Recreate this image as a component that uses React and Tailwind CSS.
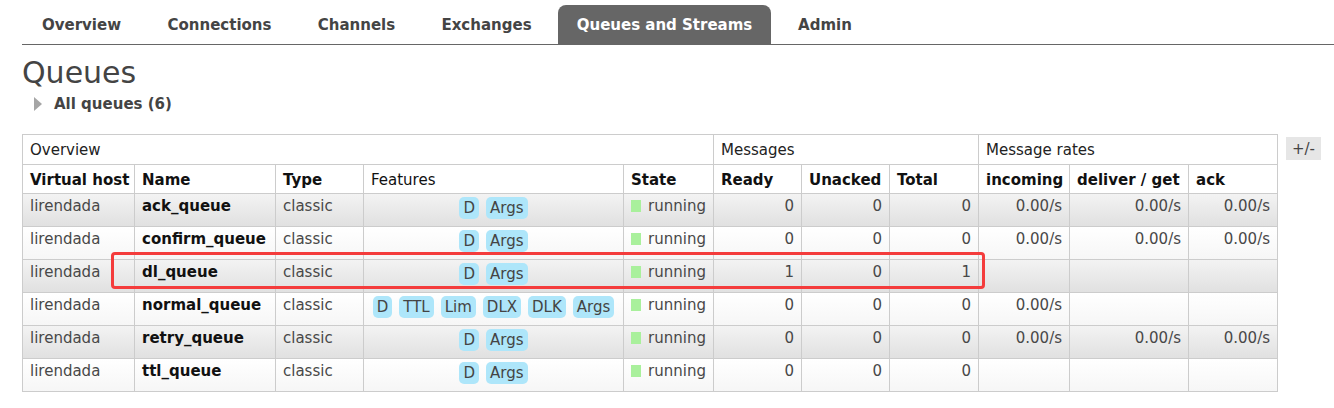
import React from "react";

const tabs = [
  { label: "Overview", w: "w-[119px]" },
  { label: "Connections", w: "w-[143px]" },
  { label: "Channels", w: "w-[117px]" },
  { label: "Exchanges", w: "w-[129px]" },
  { label: "Queues and Streams", w: "w-[213px]", active: true },
  { label: "Admin", w: "w-[94px]" },
];

const queues = [
  { name: "ack_queue", features: ["D", "Args"], ready: 0, unacked: 0, total: 0, incoming: "0.00/s", deliver: "0.00/s", ack: "0.00/s" },
  { name: "confirm_queue", features: ["D", "Args"], ready: 0, unacked: 0, total: 0, incoming: "0.00/s", deliver: "0.00/s", ack: "0.00/s" },
  { name: "dl_queue", features: ["D", "Args"], ready: 1, unacked: 0, total: 1, incoming: "", deliver: "", ack: "" },
  { name: "normal_queue", features: ["D", "TTL", "Lim", "DLX", "DLK", "Args"], ready: 0, unacked: 0, total: 0, incoming: "0.00/s", deliver: "", ack: "" },
  { name: "retry_queue", features: ["D", "Args"], ready: 0, unacked: 0, total: 0, incoming: "0.00/s", deliver: "0.00/s", ack: "0.00/s" },
  { name: "ttl_queue", features: ["D", "Args"], ready: 0, unacked: 0, total: 0, incoming: "", deliver: "", ack: "" },
];

const th = "whitespace-nowrap border border-[#ccc] px-[7px] pt-[6px] pb-[4px] text-left font-bold text-[#111]";
const groupTh = "whitespace-nowrap border border-[#ccc] px-[7px] pt-[6px] pb-[5px] text-left font-normal text-[#222]";
const td = "h-[33px] whitespace-nowrap border border-[#ccc] px-[7px] pt-[3px] pb-0 align-top";
const num = td + " text-right";

export default function App() {
  return (
    <div className="min-h-[408px] bg-white font-['DejaVu_Sans',Verdana,sans-serif] text-[15px] leading-[18px] text-[#484848]">
      {/* Tabs */}
      <div className="pt-[5px] pl-[22px]">
        <ul className="flex gap-[7px] border-b border-[#666]">
          {tabs.map((t) => (
            <li
              key={t.label}
              className={
                "flex h-[39px] items-center justify-center rounded-t-[8px] font-bold " +
                t.w +
                (t.active ? " bg-[#666] text-white" : " text-[#444]")
              }
            >
              {t.label}
            </li>
          ))}
        </ul>
      </div>

      <div className="pl-[22px]">
        <h1 className="mt-[10px] text-[30px] leading-[36px] text-[#444]">Queues</h1>
        <div className="mt-[4px] flex items-center pl-[12px] font-bold text-[#444]">
          <svg width="9" height="14" viewBox="0 0 9 14" className="mr-[11px]">
            <path d="M0 0 L8 7 L0 14 Z" fill="#a6a6a6" />
          </svg>
          All queues (6)
        </div>

        {/* Table */}
        <div className="mt-[21px] flex items-start gap-[8px]">
          <div className="relative shrink-0">
            <table className="w-[1255px] table-fixed border-collapse">
              <colgroup>
                <col className="w-[112px]" />
                <col className="w-[141px]" />
                <col className="w-[88px]" />
                <col className="w-[260px]" />
                <col className="w-[90px]" />
                <col className="w-[88px]" />
                <col className="w-[88px]" />
                <col className="w-[89px]" />
                <col className="w-[91px]" />
                <col className="w-[119px]" />
                <col className="w-[89px]" />
              </colgroup>
              <thead>
                <tr>
                  <th colSpan={5} className={groupTh}>Overview</th>
                  <th colSpan={3} className={groupTh}>Messages</th>
                  <th colSpan={3} className={groupTh}>Message rates</th>
                </tr>
                <tr>
                  <th className={th}>Virtual host</th>
                  <th className={th}>Name</th>
                  <th className={th}>Type</th>
                  <th className={th + " font-normal"}>Features</th>
                  <th className={th}>State</th>
                  <th className={th}>Ready</th>
                  <th className={th}>Unacked</th>
                  <th className={th}>Total</th>
                  <th className={th}>incoming</th>
                  <th className={th}>deliver / get</th>
                  <th className={th}>ack</th>
                </tr>
              </thead>
              <tbody>
                {queues.map((q, i) => (
                  <tr
                    key={q.name}
                    className={
                      i % 2 === 0
                        ? "bg-gradient-to-b from-[#f3f3f3] to-[#e0e0e0]"
                        : "bg-gradient-to-b from-white to-[#f6f6f6]"
                    }
                  >
                    <td className={td}>lirendada</td>
                    <td className={td + " font-bold text-[#111]"}>{q.name}</td>
                    <td className={td}>classic</td>
                    <td className={td}>
                      <div className="flex justify-center gap-[7px]">
                        {q.features.map((f) => (
                          <span
                            key={f}
                            className="flex h-[22px] items-center rounded-[5px] bg-[#aee6fa] px-[4px] text-[#444]"
                          >
                            {f}
                          </span>
                        ))}
                      </div>
                    </td>
                    <td className={td}>
                      <div className="flex items-center gap-[7px]">
                        <span className="h-[12px] w-[12px] bg-[#a9f09c]" />
                        running
                      </div>
                    </td>
                    <td className={num}>{q.ready}</td>
                    <td className={num}>{q.unacked}</td>
                    <td className={num}>{q.total}</td>
                    <td className={num}>{q.incoming}</td>
                    <td className={num}>{q.deliver}</td>
                    <td className={num}>{q.ack}</td>
                  </tr>
                ))}
              </tbody>
            </table>
            {/* annotation box */}
            <div className="pointer-events-none absolute left-[89px] top-[118px] h-[37px] w-[874px] rounded-[4px] border-[3px] border-[#f43c3c]" />
          </div>
          <div className="mt-[3px] flex h-[23px] w-[35px] shrink-0 items-center justify-center bg-[#e6e6e6] text-[#444]">
            +/-
          </div>
        </div>
      </div>
    </div>
  );
}
